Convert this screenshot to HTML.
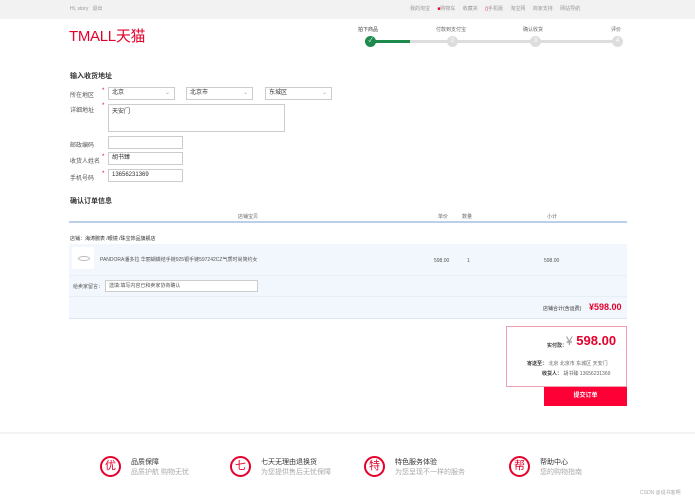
<!DOCTYPE html><html><head><meta charset="utf-8"><style>
*{margin:0;padding:0;box-sizing:border-box}
body{width:695px;height:500px;position:relative;background:#fff;font-family:"Liberation Sans","Noto Sans CJK SC",sans-serif;font-size:6px;color:#333;overflow:hidden}
.a{position:absolute;white-space:nowrap}
.box{position:absolute;border:1px solid #ccc;background:#fff;padding-left:3px;line-height:11px;font-size:6px}
.lab{position:absolute;font-size:6px;color:#555}
.st{position:absolute;color:#e4002b;font-size:6px}
.c{position:absolute;width:11px;height:11px;border-radius:50%;background:#ddd;color:#fff;font-size:6px;text-align:center;line-height:11px}
.f{position:absolute;width:21px;height:21px;border:2px solid #e4002b;border-radius:50%;color:#e4002b;font-size:11px;text-align:center;line-height:17px}
</style></head><body>
<div class="a" style="left:0;top:0;width:695px;height:19px;background:#f2f2f2"></div>
<div class="a" style="left:70px;top:5px;color:#999;font-size:5px">Hi, story &nbsp; 退出</div>
<div class="a" style="left:410px;top:5px;color:#999;font-size:5px;word-spacing:6px">我的淘宝 <span style="color:#e4002b">■</span>购物车 收藏夹 <span style="color:#e4002b">▯</span>手机版 淘宝网 商家支持 网站导航</div>
<div class="a" style="left:69px;top:25px;color:#e4002b;font-size:15px;letter-spacing:-0.3px">TMALL天猫</div>
<div class="a" style="left:358px;top:26px;font-size:5px;color:#333">拍下商品</div>
<div class="a" style="left:436px;top:26px;font-size:5px;color:#666">付款到支付宝</div>
<div class="a" style="left:523px;top:26px;font-size:5px;color:#666">确认收货</div>
<div class="a" style="left:611px;top:26px;font-size:5px;color:#666">评价</div>
<div class="a" style="left:372px;top:40px;width:245px;height:3px;background:#ddd"></div>
<div class="a" style="left:372px;top:40px;width:38px;height:3px;background:#1e8a4b"></div>
<div class="c" style="left:365px;top:36px;background:#1e8a4b">✓</div>
<div class="c" style="left:447px;top:36px">2</div>
<div class="c" style="left:530px;top:36px">3</div>
<div class="c" style="left:612px;top:36px">4</div>
<div class="a" style="left:70px;top:71px;font-size:7px;font-weight:bold">输入收货地址</div>
<div class="lab" style="left:70px;top:90px">所在地区</div><div class="st" style="left:102px;top:88px">*</div>
<div class="box" style="left:108px;top:87px;width:67px;height:13px">北京<span style="float:right;margin-right:4px;color:#aaa">⌄</span></div>
<div class="box" style="left:186px;top:87px;width:67px;height:13px">北京市<span style="float:right;margin-right:4px;color:#aaa">⌄</span></div>
<div class="box" style="left:265px;top:87px;width:67px;height:13px">东城区<span style="float:right;margin-right:4px;color:#aaa">⌄</span></div>
<div class="lab" style="left:70px;top:105px">详细地址</div><div class="st" style="left:102px;top:103px">*</div>
<div class="box" style="left:108px;top:104px;width:177px;height:28px;line-height:14px">天安门</div>
<div class="lab" style="left:70px;top:140px">邮政编码</div>
<div class="box" style="left:108px;top:136px;width:75px;height:13px"></div>
<div class="lab" style="left:70px;top:156px">收货人姓名</div><div class="st" style="left:102px;top:154px">*</div>
<div class="box" style="left:108px;top:152px;width:75px;height:13px">胡书臻</div>
<div class="lab" style="left:70px;top:173px">手机号码</div><div class="st" style="left:102px;top:171px">*</div>
<div class="box" style="left:108px;top:169px;width:75px;height:13px">13656231369</div>
<div class="a" style="left:70px;top:196px;font-size:7px;font-weight:bold">确认订单信息</div>
<div class="a" style="left:238px;top:213px;font-size:5px;color:#666">店铺宝贝</div>
<div class="a" style="left:438px;top:213px;font-size:5px;color:#666">单价</div>
<div class="a" style="left:462px;top:213px;font-size:5px;color:#666">数量</div>
<div class="a" style="left:547px;top:213px;font-size:5px;color:#666">小计</div>
<div class="a" style="left:69px;top:221px;width:558px;height:2px;background:#b9d0e8"></div>
<div class="a" style="left:70px;top:235px;font-size:5px">店铺：海涛腕表 /眼镜 /珠宝饰品旗舰店</div>
<div class="a" style="left:69px;top:244px;width:558px;height:75px;background:#f2f7fd;border-bottom:1px solid #dde6f0"></div>
<div class="a" style="left:72px;top:247px;width:22px;height:22px;background:#fff"></div>
<div class="a" style="left:78px;top:256px;width:12px;height:5px;border:1px solid #bbb;border-radius:50%"></div>
<div class="a" style="left:100px;top:256px;font-size:5px;color:#555">PANDORA潘多拉 华丽蝴蝶结手链925银手链597242CZ气质时尚简约女</div>
<div class="a" style="left:434px;top:258px;font-size:5px;color:#555">598.00</div>
<div class="a" style="left:467px;top:258px;font-size:5px;color:#555">1</div>
<div class="a" style="left:544px;top:258px;font-size:5px;color:#555">598.00</div>
<div class="a" style="left:69px;top:275px;width:558px;height:1px;background:#e8eef5"></div>
<div class="a" style="left:73px;top:283px;font-size:5px;color:#555">给卖家留言：</div>
<div class="box" style="left:105px;top:280px;width:153px;height:12px;font-size:5px;color:#555;line-height:10px">选填:填写内容已和卖家协商确认</div>
<div class="a" style="left:69px;top:296px;width:558px;height:1px;background:#e8eef5"></div>
<div class="a" style="left:543px;top:305px;font-size:5px">店铺合计(含运费)</div>
<div class="a" style="left:589px;top:302px;font-size:9px;font-weight:bold;color:#e4002b">¥598.00</div>
<div class="a" style="left:506px;top:326px;width:121px;height:61px;border:1px solid #f0a0b0"></div>
<div class="a" style="left:547px;top:342px;font-size:5px;font-weight:bold">实付款：</div>
<div class="a" style="left:566px;top:333px;font-size:13px;color:#e4002b"><span style="color:#999;font-size:12px">¥</span><b> 598.00</b></div>
<div class="a" style="left:527px;top:360px;font-size:5px;color:#666"><b style="color:#333">寄送至：</b> 北京 北京市 东城区 天安门</div>
<div class="a" style="left:542px;top:370px;font-size:5px;color:#666"><b style="color:#333">收货人：</b> 胡书臻 13656231369</div>
<div class="a" style="left:544px;top:387px;width:83px;height:19px;background:#ff0036;color:#fff;font-size:6px;font-weight:bold;text-align:center;line-height:19px">提交订单</div>
<div class="a" style="left:0;top:432px;width:695px;height:2px;background:#f3f3f3"></div>
<div class="f" style="left:100px;top:456px">优</div>
<div class="a" style="left:131px;top:457px;font-size:7px">品质保障</div><div class="a" style="left:131px;top:467px;font-size:7px;color:#aaa">品质护航 购物无忧</div>
<div class="f" style="left:230px;top:456px">七</div>
<div class="a" style="left:261px;top:457px;font-size:7px">七天无理由退换货</div><div class="a" style="left:261px;top:467px;font-size:7px;color:#aaa">为您提供售后无忧保障</div>
<div class="f" style="left:364px;top:456px">特</div>
<div class="a" style="left:395px;top:457px;font-size:7px">特色服务体验</div><div class="a" style="left:395px;top:467px;font-size:7px;color:#aaa">为您呈现不一样的服务</div>
<div class="f" style="left:509px;top:456px">帮</div>
<div class="a" style="left:540px;top:457px;font-size:7px">帮助中心</div><div class="a" style="left:540px;top:467px;font-size:7px;color:#aaa">您的购物指南</div>
<div class="a" style="left:640px;top:489px;font-size:5px;color:#aaa">CSDN @说书客啊</div>
</body></html>
